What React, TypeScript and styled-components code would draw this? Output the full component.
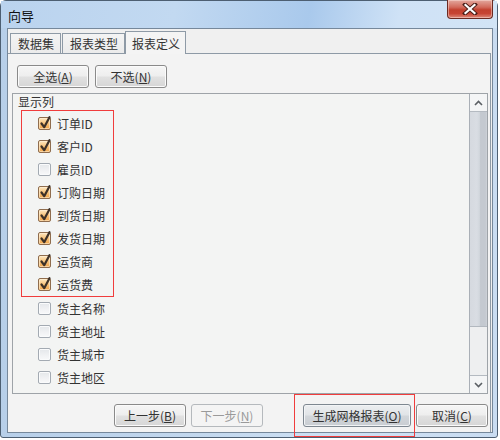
import React from "react";
import styled, { createGlobalStyle, css } from "styled-components";

const Global = createGlobalStyle`
  html, body { margin: 0; padding: 0; background: #ffffff; }
  body { font-family: "Noto Sans CJK SC", "Noto Sans", sans-serif; font-size: 12px; color: #333; }
  * { box-sizing: border-box; }
`;

const Window = styled.div`
  width: 498px;
  height: 438px;
  border: 1px solid #4d5f72;
  border-radius: 6px 6px 3px 3px;
  background: linear-gradient(90deg, #b7cfe9 0%, #c3d8ee 40%, #cfe1f4 70%, #c9dcf1 100%);
  display: flex;
  flex-direction: column;
`;

const TitleBar = styled.div`
  height: 27px;
  display: flex;
  justify-content: space-between;
  align-items: flex-start;
  padding-left: 7px;
  background: linear-gradient(100deg, #bad3ee 0%, #c2d9f1 35%, #a9c9ec 62%, #cfe2f6 80%, #d2e4f6 100%);
`;

const Title = styled.div`
  margin-top: 7px;
  font-size: 13px;
  line-height: 16px;
  color: #111;
`;

const CloseButton = styled.div`
  width: 46px;
  height: 19px;
  margin-top: -1px;
  margin-right: 4px;
  border: 1px solid #6b2a22;
  border-top: none;
  border-radius: 0 0 4px 4px;
  background: linear-gradient(180deg, #e3a89e 0%, #d26a5b 40%, #c2402e 55%, #c74433 75%, #dd8a7a 100%);
  box-shadow: inset 0 0 0 1px rgba(255, 230, 225, 0.45);
  display: flex;
  align-items: center;
  justify-content: center;
`;

const Client = styled.div`
  flex: 1;
  margin: 0 4px 4px 6px;
  border: 1px solid #76889b;
  background: #f0f0f0;
  display: flex;
  flex-direction: column;
`;

const TabStrip = styled.div`
  height: 24px;
  display: flex;
  align-items: flex-end;
  padding-left: 2px;
`;

const Tab = styled.div<{ $active?: boolean }>`
  height: 20px;
  padding: 0 6px 0 7px;
  margin-left: 1px;
  border: 1px solid #8e9aa6;
  border-bottom: none;
  background: linear-gradient(180deg, #f4f4f4 0%, #ebebeb 100%);
  display: flex;
  align-items: center;
  font-size: 12px;
  line-height: 16px;
  color: #333;
  &:first-child { margin-left: 0; }
  ${(p) =>
    p.$active &&
    css`
      position: relative;
      z-index: 1;
      height: 23px;
      margin-left: 0;
      margin-bottom: -1px;
      padding: 1px 5px 0 6px;
      background: #f4f4f4;
    `}
`;

const TabPanel = styled.div`
  flex: 1;
  margin-right: 1px;
  border-top: 1px solid #8e9aa6;
  border-right: 1px solid #8e9aa6;
  background: #f3f3f3;
  display: flex;
  flex-direction: column;
  padding: 11px 2px 5px 4px;
`;

const TopButtons = styled.div`
  display: flex;
  gap: 6px;
  padding-left: 5px;
`;

const Button = styled.div<{ $w?: number; $disabled?: boolean; $default?: boolean }>`
  width: ${(p) => p.$w ?? 72}px;
  height: 23px;
  border: 1px solid #8a8a8a;
  border-radius: 3px;
  background: linear-gradient(180deg, #f6f6f6 0%, #eeeeee 48%, #e1e1e1 52%, #d6d6d6 100%);
  box-shadow: inset 0 0 0 1px #fbfbfb;
  display: flex;
  align-items: center;
  justify-content: center;
  font-size: 12px;
  line-height: 16px;
  color: #333;
  white-space: nowrap;
  u { text-decoration: underline; text-underline-offset: 1px; }
  ${(p) =>
    p.$disabled &&
    css`
      border-color: #b5b9bd;
      background: #f4f4f4;
      box-shadow: none;
      color: #9a9a9a;
    `}
  ${(p) =>
    p.$default &&
    css`
      border-color: #7e8790;
      background: linear-gradient(180deg, #eceef0 0%, #e1e4e7 48%, #d2d6da 52%, #c9cdd2 100%);
      box-shadow: inset 0 0 0 1px #f2f4f6;
    `}
`;

const ListBox = styled.div`
  margin-top: 5px;
  height: 301px;
  border: 1px solid #9ea3a8;
  background: #f3f4f3;
  display: flex;
`;

const ListContent = styled.div`
  flex: 1;
  display: flex;
  flex-direction: column;
  overflow: hidden;
`;

const GroupLabel = styled.div`
  height: 16px;
  padding-left: 5px;
  font-size: 12px;
  line-height: 15px;
  color: #333;
`;

const Highlight = styled.div`
  align-self: flex-start;
  margin-left: 8px;
  width: 93px;
  border: 1px solid #f03c3c;
  padding: 1px 0 0 16px;
`;

const Row = styled.div<{ $indent?: number }>`
  height: 23px;
  display: flex;
  align-items: center;
  gap: 6px;
  padding-left: ${(p) => p.$indent ?? 0}px;
  font-size: 12px;
  color: #333;
  white-space: nowrap;
`;

const Box = styled.div<{ $checked: boolean }>`
  position: relative;
  width: 13px;
  height: 13px;
  flex: none;
  border-radius: 2px;
  ${(p) =>
    p.$checked
      ? css`
          border: 1px solid #8f6d4e;
          background: linear-gradient(180deg, #fde7c0 0%, #f7c27a 50%, #f0a44a 100%);
          box-shadow: inset 0 0 0 1px rgba(255, 240, 215, 0.6);
        `
      : css`
          border: 1px solid #a3aab2;
          background: linear-gradient(180deg, #e4e7ea 0%, #f1f2f4 60%, #f8f9fa 100%);
          box-shadow: inset 0 0 0 1px #fafbfc;
        `}
  svg { position: absolute; left: 0; top: -3px; overflow: visible; }
`;

const ScrollBar = styled.div`
  width: 18px;
  border-left: 1px solid #a9afb6;
  background: #eeeff0;
  display: flex;
  flex-direction: column;
`;

const ScrollButton = styled.div<{ $down?: boolean }>`
  height: 18px;
  background: #f4f5f6;
  display: flex;
  align-items: center;
  justify-content: center;
  ${(p) => (p.$down ? css`border-top: 1px solid #b4bac1;` : css`border-bottom: 1px solid #b4bac1;`)}
`;

const Thumb = styled.div`
  height: 215px;
  border-bottom: 1px solid #b2b8bf;
  background: linear-gradient(90deg, #d5d9df 0%, #d9dde3 40%, #d2d7dd 55%, #c4c9d0 62%, #c4c9d0 90%, #cfd3d9 100%);
`;

const Track = styled.div`
  flex: 1;
`;

const BottomBar = styled.div`
  margin-top: 10px;
  display: flex;
  justify-content: flex-end;
  gap: 5px;
`;

const Annotated = styled.div`
  position: relative;
  margin-left: 35px;
  &::after {
    content: "";
    position: absolute;
    top: -10px;
    bottom: -10px;
    left: -9px;
    right: -4px;
    border: 1px solid #f03c3c;
    pointer-events: none;
  }
`;

const Check = () => (
  <svg width="13" height="15" viewBox="0 0 13 15">
    <path d="M2.5 8.5 L5.2 12.2 L10.5 2.2" fill="none" stroke="#3d3128" strokeWidth="2.2" strokeLinecap="round" strokeLinejoin="round" />
  </svg>
);

const CheckRow = ({ label, checked, indent }: { label: string; checked: boolean; indent?: number }) => (
  <Row $indent={indent}>
    <Box $checked={checked}>{checked && <Check />}</Box>
    <span>{label}</span>
  </Row>
);

const Chevron = ({ down }: { down?: boolean }) => (
  <svg width="9" height="6" viewBox="0 0 9 6">
    <path d={down ? "M1 1 L4.5 4.5 L8 1" : "M1 5 L4.5 1.5 L8 5"} fill="none" stroke="#5b5f64" strokeWidth="1.6" />
  </svg>
);

const checkedItems = ["订单ID", "客户ID", "雇员ID", "订购日期", "到货日期", "发货日期", "运货商", "运货费"];
const checkedState = [true, true, false, true, true, true, true, true];
const otherItems = ["货主名称", "货主地址", "货主城市", "货主地区"];

export default function App() {
  return (
    <>
      <Global />
      <Window>
        <TitleBar>
          <Title>向导</Title>
          <CloseButton>
            <svg width="16" height="12" viewBox="0 0 16 12">
              <path d="M3 1.5 L13 10.5 M13 1.5 L3 10.5" stroke="#4a1e18" strokeWidth="4" strokeLinecap="square" />
              <path d="M3.5 2 L12.5 10 M12.5 2 L3.5 10" stroke="#ffffff" strokeWidth="2.2" strokeLinecap="square" />
            </svg>
          </CloseButton>
        </TitleBar>
        <Client>
          <TabStrip>
            <Tab>数据集</Tab>
            <Tab>报表类型</Tab>
            <Tab $active>报表定义</Tab>
          </TabStrip>
          <TabPanel>
            <TopButtons>
              <Button>全选(<u>A</u>)</Button>
              <Button>不选(<u>N</u>)</Button>
            </TopButtons>
            <ListBox>
              <ListContent>
                <GroupLabel>显示列</GroupLabel>
                <Highlight>
                  {checkedItems.map((l, i) => (
                    <CheckRow key={l} label={l} checked={checkedState[i]} />
                  ))}
                </Highlight>
                {otherItems.map((l) => (
                  <CheckRow key={l} label={l} checked={false} indent={25} />
                ))}
              </ListContent>
              <ScrollBar>
                <ScrollButton>
                  <Chevron />
                </ScrollButton>
                <Thumb />
                <Track />
                <ScrollButton $down>
                  <Chevron down />
                </ScrollButton>
              </ScrollBar>
            </ListBox>
            <BottomBar>
              <Button>上一步(<u>B</u>)</Button>
              <Button $disabled>下一步(<u>N</u>)</Button>
              <Annotated>
                <Button $w={108} $default>生成网格报表(<u>O</u>)</Button>
              </Annotated>
              <Button>取消(<u>C</u>)</Button>
            </BottomBar>
          </TabPanel>
        </Client>
      </Window>
    </>
  );
}
